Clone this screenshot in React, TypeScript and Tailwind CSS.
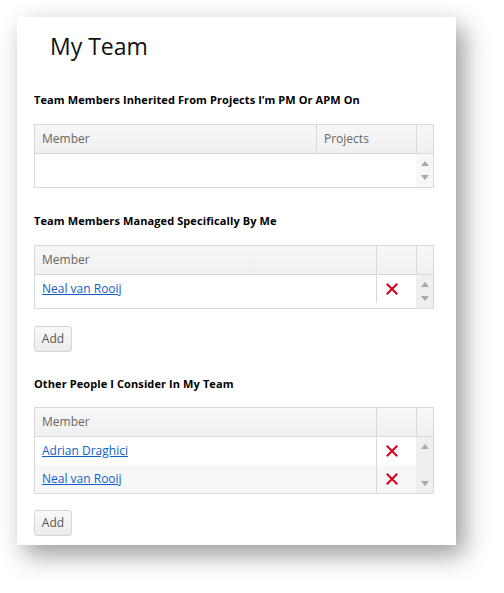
import React from 'react';

const font = { fontFamily: '"Open Sans", "Noto Sans", Arial, sans-serif' };

function RemoveIcon() {
  return (
    <svg width="12" height="12" viewBox="0 0 12 12" className="block">
      <path d="M1.5 1.5 L10.5 10.5 M10.5 1.5 L1.5 10.5" stroke="#d4001c" strokeWidth="2" strokeLinecap="square" />
    </svg>
  );
}

function ScrollTrack({ bg }: { bg: string }) {
  return (
    <div className={`w-[17px] flex flex-col justify-between items-center py-[7px] ${bg}`}>
      <svg width="8" height="5" viewBox="0 0 8 5">
        <path d="M0 5 L4 0 L8 5 Z" fill="#a9a9a9" />
      </svg>
      <svg width="8" height="5" viewBox="0 0 8 5">
        <path d="M0 0 L4 5 L8 0 Z" fill="#a9a9a9" />
      </svg>
    </div>
  );
}

function Heading({ children }: { children: React.ReactNode }) {
  return <h2 className="text-[11px] leading-4 font-bold text-black tracking-[0.1px]">{children}</h2>;
}

function AddButton() {
  return (
    <button className="w-[38px] h-[26px] rounded-[3px] border border-[#d6d6d6] bg-gradient-to-b from-[#f8f8f8] to-[#ececec] text-[12px] text-[#555]">
      Add
    </button>
  );
}

function MemberTable({ members }: { members: string[] }) {
  return (
    <div className="border border-[#d9d9d9] w-[400px]">
      <div className="flex h-[29px] bg-gradient-to-b from-[#f7f7f7] to-[#f0f0f0] border-b border-[#d9d9d9]">
        <div className="flex-1 flex items-center pl-[7px] text-[12px] text-[#666]">Member</div>
        <div className="w-[40px] border-l border-[#d9d9d9]" />
        <div className="w-[17px] border-l border-[#d9d9d9]" />
      </div>
      <div className="flex">
        <div className="flex-1">
          {members.map((m, i) => (
            <div key={m} className={`flex h-[28px] ${i % 2 === 1 ? 'bg-[#f7f7f7]' : 'bg-white'}`}>
              <div className="flex-1 flex items-center pl-[7px]">
                <a href="#" className="text-[12px] text-[#1060c9] underline">{m}</a>
              </div>
              <div className="w-[40px] border-l border-[#d9d9d9] flex items-center pl-[9px]">
                <RemoveIcon />
              </div>
            </div>
          ))}
          {members.length === 1 && <div className="h-[5px]" />}
        </div>
        <ScrollTrack bg="bg-[#efefef]" />
      </div>
    </div>
  );
}

function App() {
  return (
    <div className="min-h-screen bg-white pt-[17px] pl-[17px]" style={font}>
      <div className="w-[439px] h-[528px] bg-white shadow-[8px_10px_24px_rgba(0,0,0,0.4)] pl-[17px]">
        <h1 className="pl-[16px] pt-[13px] text-[23px] leading-8 text-[#111]">My Team</h1>

        <div className="mt-[30px]">
          <Heading>Team Members Inherited From Projects I’m PM Or APM On</Heading>
        </div>
        <div className="mt-4 border border-[#d9d9d9] w-[400px]">
          <div className="flex h-[29px] bg-gradient-to-b from-[#f7f7f7] to-[#f0f0f0] border-b border-[#d9d9d9] text-[12px] text-[#666]">
            <div className="flex-1 flex items-center pl-[7px]">Member</div>
            <div className="w-[100px] border-l border-[#d9d9d9] flex items-center pl-[7px]">Projects</div>
            <div className="w-[17px] border-l border-[#d9d9d9]" />
          </div>
          <div className="flex h-[33px]">
            <div className="flex-1 bg-white" />
            <ScrollTrack bg="bg-[#f7f7f7]" />
          </div>
        </div>

        <div className="mt-[25px]">
          <Heading>Team Members Managed Specifically By Me</Heading>
        </div>
        <div className="mt-4">
          <MemberTable members={['Neal van Rooij']} />
        </div>
        <div className="mt-4">
          <AddButton />
        </div>

        <div className="mt-[24px]">
          <Heading>Other People I Consider In My Team</Heading>
        </div>
        <div className="mt-[15px]">
          <MemberTable members={['Adrian Draghici', 'Neal van Rooij']} />
        </div>
        <div className="mt-[15px]">
          <AddButton />
        </div>
      </div>
    </div>
  );
}

export default App;
